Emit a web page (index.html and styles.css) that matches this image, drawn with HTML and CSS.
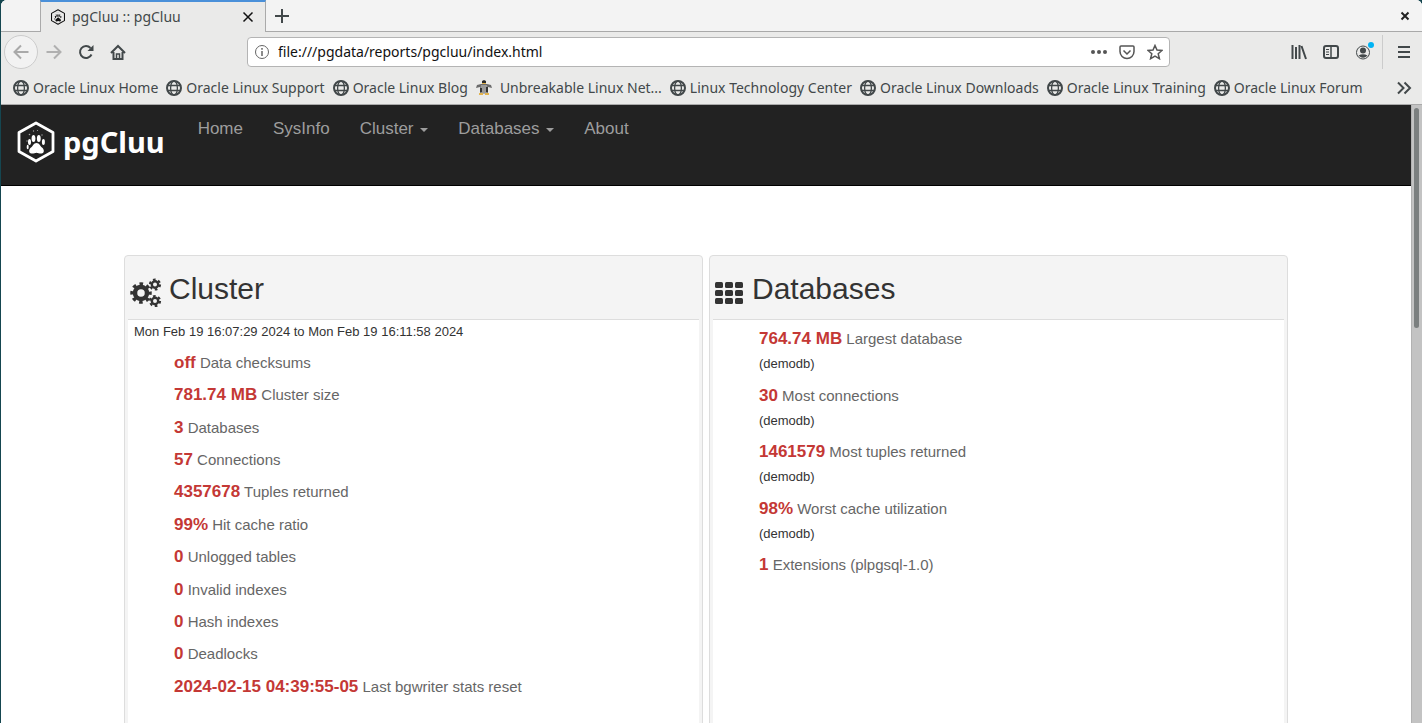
FILE: index.html
```html
<!DOCTYPE html>
<html lang="en">
<head>
<meta charset="utf-8">
<title>pgCluu :: pgCluu</title>
<link rel="stylesheet" href="styles.css">
</head>
<body>
<svg class="defs" aria-hidden="true">
  <symbol id="globe" viewBox="0 0 16 16"><g fill="none" stroke="currentColor" stroke-width="2"><circle cx="8" cy="8" r="7"/><ellipse cx="8" cy="8" rx="3.4" ry="7" stroke-width="1.3"/><path d="M1.5 5.5h13M1.5 10.5h13" stroke-width="1.3"/></g></symbol>
  <symbol id="paw" viewBox="0 0 38 42">
    <path d="M19 2 36 11.500V30.500L19 40 2 30.500V11.500Z" fill="none" stroke="currentColor" stroke-width="2.800" stroke-linejoin="round"/>
    <g fill="currentColor"><path d="M19.500 22c3 0 3.500 3 5.500 4.500 2.500 2 2.500 5.500-.500 6-2 .3-3.500-.8-5-.8s-3 1.100-5 .8c-3-.5-3-4-.5-6 2-1.500 2.500-4.500 5.500-4.500z"/>
    <ellipse cx="16.500" cy="17.500" rx="1.900" ry="3.600"/><ellipse cx="21.800" cy="17.500" rx="1.900" ry="3.600"/><ellipse cx="12.500" cy="21" rx="1.500" ry="3"/><ellipse cx="26.400" cy="21" rx="1.500" ry="3"/><ellipse cx="10.700" cy="26" rx="1" ry="2.300"/>
    <g opacity=".6"><circle cx="16.500" cy="10" r=".7"/><circle cx="20.500" cy="9.500" r=".6"/><circle cx="12.500" cy="13.500" r=".8"/><circle cx="25" cy="14" r=".7"/><circle cx="10" cy="20" r=".7"/></g></g>
  </symbol>
</svg>
<div class="window">
  <header class="chrome">
    <div class="tabbar">
      <div class="tab"><svg class="i16"><use href="#paw"/></svg><span class="tab-title">pgCluu :: pgCluu</span>
        <button class="ib" aria-label="Close tab"><svg viewBox="0 0 16 16" class="i16"><path d="M3.500 3.500l9 9m0-9l-9 9" class="s15"/></svg></button></div>
      <button class="ib newtab" aria-label="New tab"><svg viewBox="0 0 16 16" class="i16"><path d="M8 1v14M1 8h14" class="s2"/></svg></button>
      <button class="ib winclose" aria-label="Close window"><svg viewBox="0 0 16 16" class="i16"><path d="M4.500 4.500l7 7m0-7l-7 7" class="s2"/></svg></button>
    </div>
    <div class="toolbar">
      <button class="ib back" aria-label="Back"><svg viewBox="0 0 16 16" class="i16"><path d="M8 1.500L1.500 8 8 14.500M2 8h13.500" class="s2"/></svg></button>
      <button class="ib faded" aria-label="Forward"><svg viewBox="0 0 16 16" class="i16"><path d="M8 1.500L14.500 8 8 14.500M14 8H.5" class="s2"/></svg></button>
      <button class="ib" aria-label="Reload"><svg viewBox="0 0 16 16" class="i16"><path d="M13.500 10.500A6 6 0 1 1 12.500 4" class="s2"/><path d="M15.500 1v6h-6z" fill="currentColor"/></svg></button>
      <button class="ib" aria-label="Home"><svg viewBox="0 0 16 16" class="i16"><path d="M1 9l7-7 7 7M3.500 8v7h9V8" class="s2"/><path d="M6.500 15v-5h3v5" class="s15"/></svg></button>
      <div class="urlbar">
        <svg viewBox="0 0 16 16" class="i16 grey"><circle cx="8" cy="8" r="6.500" class="s1"/><path d="M8 7v5M8 4v1.700" class="s15"/></svg>
        <input type="text" aria-label="Address" value="file:///pgdata/reports/pgcluu/index.html">
        <button class="ib" aria-label="Page actions"><svg viewBox="0 0 16 16" class="i16"><g fill="currentColor"><circle cx="2" cy="8" r="2"/><circle cx="8" cy="8" r="2"/><circle cx="14" cy="8" r="2"/></g></svg></button>
        <button class="ib" aria-label="Pocket"><svg viewBox="0 0 16 16" class="i16"><path d="M2 2h12a1 1 0 0 1 1 1v4.500a7 7 0 0 1-14 0V3a1 1 0 0 1 1-1zM4.500 6.500L8 10l3.500-3.500" class="s15"/></svg></button>
        <button class="ib" aria-label="Bookmark"><svg viewBox="0 0 16 16" class="i16"><path d="M8 1.500l2 4.600 5 .4-3.800 3.300 1.200 4.900L8 12.100l-4.400 2.600 1.200-4.900L1 6.500l5-.4z" class="s15"/></svg></button>
      </div>
      <div class="tools">
        <button class="ib" aria-label="Library"><svg viewBox="0 0 16 16" class="i16"><path d="M1.500 1v14M5 3v12M8.500 1v14M10.500 2l4.500 13" class="s2"/></svg></button>
        <button class="ib" aria-label="Sidebar"><svg viewBox="0 0 16 16" class="i16"><rect x="1" y="2" width="14" height="12" rx="2" class="s2"/><path d="M8 2v12" class="s15"/><path d="M3 5.500h3M3 8h3M3 10.500h3" class="s1"/></svg></button>
        <button class="ib account" aria-label="Account"><svg viewBox="0 0 16 16" class="i16"><circle cx="8" cy="8.500" r="6.500" class="s1"/><g fill="currentColor"><circle cx="8" cy="6.500" r="3"/><path d="M3.500 11.500q4.500-2.500 9 0-4.500 4.500-9 0z"/></g></svg><span class="dot"></span></button>
      </div>
      <button class="ib menu" aria-label="Menu"><svg viewBox="0 0 16 16" class="i16"><path d="M2 3h12M2 8h12M2 13h12" class="s2"/></svg></button>
    </div>
    <nav class="bookmarks" aria-label="Bookmarks">
      <a href="#"><svg class="i16"><use href="#globe"/></svg>Oracle Linux Home</a>
      <a href="#"><svg class="i16"><use href="#globe"/></svg>Oracle Linux Support</a>
      <a href="#"><svg class="i16"><use href="#globe"/></svg>Oracle Linux Blog</a>
      <a href="#" class="uln"><svg class="i16" viewBox="0 0 16 16"><path d="M0 8l1-3 4-1h6l4 1 1 3-4-1v6H4V7z" fill="#6b6b6b"/><path d="M6 1l2-1 2 1v3H6z" fill="#2a2a2a"/><path d="M5 5h6l1 7-4 2-4-2z" fill="#9a9a9a"/><path d="M4 8h2v4H4zM10 7h2v5h-2z" fill="#333"/><path d="M6 3h4v1H6zM3 13h4v2H3zM9 13h4v2H9z" fill="#e2b34c"/></svg>Unbreakable Linux Net...</a>
      <a href="#"><svg class="i16"><use href="#globe"/></svg>Linux Technology Center</a>
      <a href="#"><svg class="i16"><use href="#globe"/></svg>Oracle Linux Downloads</a>
      <a href="#"><svg class="i16"><use href="#globe"/></svg>Oracle Linux Training</a>
      <a href="#"><svg class="i16"><use href="#globe"/></svg>Oracle Linux Forum</a>
      <button class="ib more" aria-label="More bookmarks"><svg viewBox="0 0 16 16" class="i16"><path d="M2 2.500L7.500 8 2 13.500M8.500 2.500L14 8l-5.500 5.500" class="s2"/></svg></button>
    </nav>
  </header>
  <div class="view">
    <div class="page">
      <nav class="navbar">
        <a href="#" class="brand"><svg><use href="#paw"/></svg>pgCluu</a>
        <a href="#">Home</a><a href="#">SysInfo</a><a href="#">Cluster <span class="caret"></span></a><a href="#">Databases <span class="caret"></span></a><a href="#">About</a>
      </nav>
      <main class="cards">
        <section class="card">
          <h2><svg class="hicon" viewBox="0 0 32 32"><g fill="none" stroke="currentColor"><circle cx="11" cy="16" r="6" stroke-width="4.500"/><circle cx="11" cy="16" r="9" stroke-width="3.500" stroke-dasharray="3.534 3.534" stroke-dashoffset="1.767"/><circle cx="25" cy="7.500" r="3.200" stroke-width="2.400"/><circle cx="25" cy="7.500" r="5" stroke-width="2.200" stroke-dasharray="2.618 2.618"/><circle cx="25" cy="24" r="3.200" stroke-width="2.400"/><circle cx="25" cy="24" r="5" stroke-width="2.200" stroke-dasharray="2.618 2.618"/></g></svg>Cluster</h2>
          <div class="body">
            <p class="range">Mon Feb 19 16:07:29 2024 to Mon Feb 19 16:11:58 2024</p>
            <ul class="stats">
              <li><b>off</b> Data checksums</li>
              <li><b>781.74 MB</b> Cluster size</li>
              <li><b>3</b> Databases</li>
              <li><b>57</b> Connections</li>
              <li><b>4357678</b> Tuples returned</li>
              <li><b>99%</b> Hit cache ratio</li>
              <li><b>0</b> Unlogged tables</li>
              <li><b>0</b> Invalid indexes</li>
              <li><b>0</b> Hash indexes</li>
              <li><b>0</b> Deadlocks</li>
              <li><b>2024-02-15 04:39:55-05</b> Last bgwriter stats reset</li>
            </ul>
          </div>
        </section>
        <section class="card">
          <h2><svg class="hicon tiles" viewBox="2 0 30 32"><g fill="currentColor"><rect x="2" y="5" width="8" height="6" rx="1.500"/><rect x="12" y="5" width="8" height="6" rx="1.500"/><rect x="22" y="5" width="8" height="6" rx="1.500"/><rect x="2" y="13" width="8" height="6" rx="1.500"/><rect x="12" y="13" width="8" height="6" rx="1.500"/><rect x="22" y="13" width="8" height="6" rx="1.500"/><rect x="2" y="21" width="8" height="6" rx="1.500"/><rect x="12" y="21" width="8" height="6" rx="1.500"/><rect x="22" y="21" width="8" height="6" rx="1.500"/></g></svg>Databases</h2>
          <div class="body">
            <ul class="stats pairs">
              <li><b>764.74 MB</b> Largest database<small>(demodb)</small></li>
              <li><b>30</b> Most connections<small>(demodb)</small></li>
              <li><b>1461579</b> Most tuples returned<small>(demodb)</small></li>
              <li><b>98%</b> Worst cache utilization<small>(demodb)</small></li>
              <li><b>1</b> Extensions (plpgsql-1.0)</li>
            </ul>
          </div>
        </section>
      </main>
    </div>
    <div class="scroll"><div class="thumb"></div></div>
  </div>
</div>
</body>
</html>
```
FILE: styles.css
```css
* { box-sizing: border-box; }
body { margin: 0; background: #154650; font-family: "Liberation Sans", Arial, sans-serif; }
a { text-decoration: none; color: inherit; }
.defs { display: none; }
.window { height: 100vh; margin-left: 1px; display: flex; flex-direction: column; overflow: hidden; border-radius: 6px 6px 0 0; background: #fff; }
.chrome { background: #eaeae9; color: #42484a; font: 14px/20px "Noto Sans", sans-serif; border-bottom: 1px solid #aaa; }
.i16 { width: 16px; height: 16px; flex: none; display: block; }
.ib { border: 0; background: none; padding: 0; color: inherit; flex: none; }
.s1, .s15, .s2 { fill: none; stroke: currentColor; stroke-width: 1; }
.s15 { stroke-width: 1.5; }
.s2 { stroke-width: 2; }
.grey { color: #666; }

.tabbar { height: 32px; display: flex; align-items: center; background: #f3f3f3; border-bottom: 1px solid #a9a9a9; padding: 0 9px 0 39px; }
.tab { width: 226px; height: 32px; margin-bottom: -1px; display: flex; align-items: center; gap: 6px; padding: 0 9px; background: #eaeae9; border: 1px solid #aaa; border-top: 2px solid #4a90d9; border-bottom: 0; }
.tab svg:first-child { color: #111; }
.tab-title { flex: 1; }
.newtab { margin-left: 8px; }
.winclose { margin-left: auto; color: #222; }

.toolbar { height: 40px; display: flex; align-items: center; gap: 16px; padding: 0 10px 0 3px; }
.back { width: 34px; height: 34px; border: 1px solid #ccc; border-radius: 50%; background: #f2f2f2; padding: 0 8px; color: #a9a9a9; margin-right: -8px; }
.faded { color: #b0b0b0; }
.urlbar { flex: 1; height: 30px; margin: 0 105px; display: flex; align-items: center; gap: 12px; padding: 0 6px; background: #fff; border: 1px solid #b4b4b4; border-radius: 4px; color: #555; }
.urlbar input { flex: 1; min-width: 0; border: 0; outline: 0; padding: 0; margin-left: -4px; background: none; color: #111; font: 14px/20px "Noto Sans", sans-serif; }
.tools { display: flex; gap: 16px; }
.account { position: relative; }
.dot { position: absolute; right: -3px; top: -2px; width: 6px; height: 6px; border-radius: 50%; background: #00b3f4; }
.menu { height: 34px; padding-left: 13px; border-left: 1px solid #ccc; margin-left: -5px; }

.bookmarks { height: 32px; display: flex; align-items: center; gap: 8px; padding: 0 10px 0 12px; white-space: nowrap; }
.bookmarks a { display: flex; align-items: center; gap: 4px; }
.bookmarks .uln { gap: 8px; }
.more { margin-left: auto; }

.view { flex: 1; min-height: 0; display: flex; }
.page { flex: 1; overflow: hidden; }
.scroll { width: 11px; background: #c3c3c3; border-left: 1px solid #b2b2b2; padding: 3px 2px; }
.thumb { width: 5px; height: 220px; border-radius: 3px; background: #7b7f7f; }

.navbar { height: 81px; display: flex; align-items: flex-start; gap: 30px; padding: 14px 15px; background: #222; border-bottom: 1px solid #000; color: #9d9d9d; font-size: 17px; line-height: 20px; }
.brand { display: flex; align-items: center; gap: 7px; height: 46px; margin-right: 3px; color: #fff; font: bold 29px/40px "Noto Sans", sans-serif; }
.brand svg { width: 40px; height: 42px; }
.caret { display: inline-block; margin-left: 2px; vertical-align: middle; border: 4px solid transparent; border-top-color: currentColor; border-bottom: 0; }

.cards { max-width: 1164px; margin: 69px auto 0; display: grid; grid-template-columns: 1fr 1fr; gap: 6px; }
.card { min-height: 520px; padding: 0 3px; background: #f4f4f4; border: 1px solid #ddd; border-radius: 4px; color: #333; }
.card h2 { height: 64px; margin: 0; padding: 2px 2px 0; display: flex; align-items: center; gap: 7px; font-size: 30px; line-height: 34px; font-weight: 400; border-bottom: 1px solid #ddd; }
.hicon { width: 32px; height: 32px; margin-top: 8px; }
.tiles { width: 30px; }
.body { min-height: 456px; padding: 3px 6px; background: #fff; }
.range { margin: 0; font-size: 13px; line-height: 18px; }
.stats { list-style: none; margin: 10px 0 0; padding: 0 0 0 40px; height: 356px; display: grid; grid-auto-rows: 1fr; color: #666; font-size: 15px; line-height: 24px; }
.stats b { color: #c43835; font-size: 17px; }
.pairs { height: 283px; margin: 4px 0 0; }
.stats small { display: block; color: #333; font-size: 13px; line-height: 26px; }
```
